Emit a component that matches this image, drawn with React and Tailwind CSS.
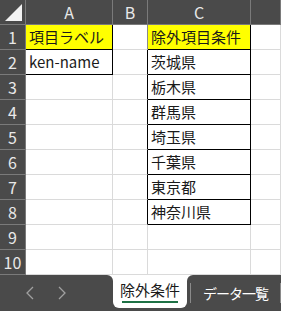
const font = { fontFamily: '"Noto Sans CJK JP", "Noto Sans", sans-serif' };

const cols = [
  { key: 'A', w: 'w-[87px]' },
  { key: 'B', w: 'w-[35px]' },
  { key: 'C', w: 'w-[103px]' },
  { key: 'D', w: 'flex-1', hide: true },
];

const cells = {
  A1: { text: '項目ラベル', cls: 'bg-[#ffff00] border-r-black border-b-black' },
  A2: { text: 'ken-name', cls: 'border-r-black border-b-black' },
  B1: { cls: 'border-r-[#8a8a8a]' },
  C1: { text: '除外項目条件', cls: 'bg-[#ffff00] border-r-black border-b-black' },
  C2: { text: '茨城県', cls: 'border-r-black border-b-black' },
  C3: { text: '栃木県', cls: 'border-r-black border-b-black' },
  C4: { text: '群馬県', cls: 'border-r-black border-b-black' },
  C5: { text: '埼玉県', cls: 'border-r-black border-b-black' },
  C6: { text: '千葉県', cls: 'border-r-black border-b-black' },
  C7: { text: '東京都', cls: 'border-r-black border-b-black' },
  C8: { text: '神奈川県', cls: 'border-r-black border-b-black' },
};
for (let r = 2; r <= 8; r++) cells['B' + r] = { cls: 'border-r-black' };

function Chevron({ left }) {
  return (
    <svg width="10" height="16" viewBox="0 0 10 16" fill="none" stroke="#a0a0a0" strokeWidth="1.3">
      <path d={left ? 'M8 2 L2 8 L8 14' : 'M2 2 L8 8 L2 14'} />
    </svg>
  );
}

export default function App() {
  const rows = [1, 2, 3, 4, 5, 6, 7, 8, 9, 10];
  return (
    <div className="w-[281px] h-[311px] overflow-hidden bg-white flex flex-col" style={font}>
      {/* column header */}
      <div className="flex h-[25px] bg-[#4a4a4a] border-b border-[#7a7a7a] shrink-0">
        <div className="w-[26px] border-r border-[#7a7a7a] flex items-end justify-end pr-[3px] pb-[3px]">
          <div className="w-0 h-0 border-l-[17px] border-l-transparent border-b-[17px] border-b-[#f2f2f2]" />
        </div>
        {cols.map((c) => (
          <div
            key={c.key}
            className={`${c.w} border-r border-[#7a7a7a] flex items-center justify-center text-[16px] text-[#e8e8e8]`}
          >
            {c.hide ? '' : c.key}
          </div>
        ))}
      </div>

      {rows.map((r) => (
        <div key={r} className="flex h-[25px] shrink-0">
          <div className="w-[26px] bg-[#4a4a4a] border-r border-b border-[#7a7a7a] flex items-center justify-center text-[16px] text-[#e8e8e8]">
            {r}
          </div>
          {cols.map((c) => {
            const cell = cells[c.key + r] || {};
            return (
              <div
                key={c.key}
                className={`${c.w} border-r border-b border-[#dadada] flex items-center pl-[3px] pt-[1px] text-[15px] text-[#1a1a1a] whitespace-nowrap ${cell.cls || ''}`}
              >
                {cell.text}
              </div>
            );
          })}
        </div>
      ))}

      {/* sheet tabs */}
      <div className="flex flex-1 bg-white">
        <div className="w-[113px] shrink-0 bg-[#4a4a4a] rounded-tr-[6px] flex items-center pl-[25px] gap-[22px]">
          <Chevron left />
          <Chevron />
        </div>
        <div className="w-[74px] shrink-0 bg-[#4a4a4a]">
          <div className="h-[33px] bg-white rounded-b-[6px] flex flex-col items-center pt-[5px]">
            <span className="text-[15px] text-[#1a1a1a] leading-[20px] whitespace-nowrap">除外条件</span>
            <div className="w-[56px] h-[2px] bg-[#1e7145] mt-[1px]" />
          </div>
        </div>
        <div className="flex-1 min-w-0 bg-[#4a4a4a] rounded-tl-[6px] flex items-center">
          <div className="w-px h-[20px] bg-[#8a8a8a] ml-[3px] shrink-0" />
          <span className="text-[14px] tracking-[-1px] text-white ml-[12px] whitespace-nowrap shrink-0">データ一覧</span>
          <div className="w-px h-[20px] bg-[#8a8a8a] ml-[12px] shrink-0" />
        </div>
      </div>
    </div>
  );
}
